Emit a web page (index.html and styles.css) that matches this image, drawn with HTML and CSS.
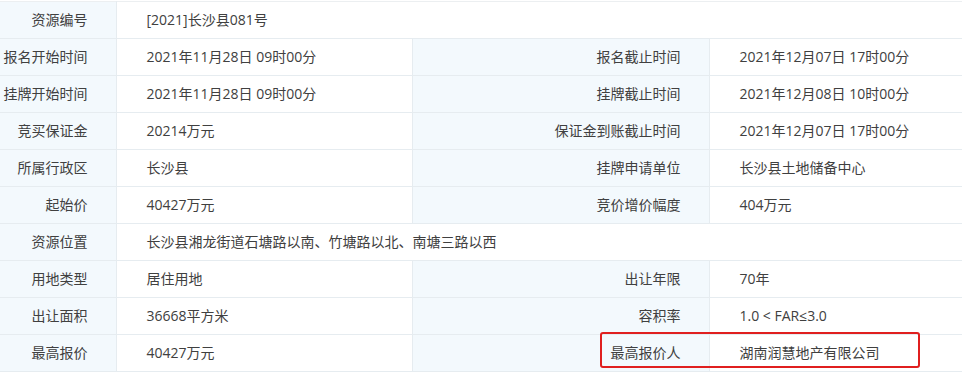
FILE: index.html
```html
<!DOCTYPE html>
<html lang="zh-CN">
<head>
<meta charset="utf-8">
<title>资源信息</title>
<link rel="stylesheet" href="styles.css">
</head>
<body>
<div class="wrap">
<table class="info">
  <colgroup>
    <col class="c1"><col class="c2"><col class="c3"><col class="c4">
  </colgroup>
  <tr><th>资源编号</th><td colspan="3">[2021]长沙县081号</td></tr>
  <tr><th>报名开始时间</th><td>2021年11月28日 09时00分</td><th>报名截止时间</th><td>2021年12月07日 17时00分</td></tr>
  <tr><th>挂牌开始时间</th><td>2021年11月28日 09时00分</td><th>挂牌截止时间</th><td>2021年12月08日 10时00分</td></tr>
  <tr><th>竞买保证金</th><td>20214万元</td><th>保证金到账截止时间</th><td>2021年12月07日 17时00分</td></tr>
  <tr><th>所属行政区</th><td>长沙县</td><th>挂牌申请单位</th><td>长沙县土地储备中心</td></tr>
  <tr><th>起始价</th><td>40427万元</td><th>竞价增价幅度</th><td>404万元</td></tr>
  <tr><th>资源位置</th><td colspan="3">长沙县湘龙街道石塘路以南、竹塘路以北、南塘三路以西</td></tr>
  <tr><th>用地类型</th><td>居住用地</td><th>出让年限</th><td>70年</td></tr>
  <tr><th>出让面积</th><td>36668平方米</td><th>容积率</th><td>1.0 &lt; FAR≤3.0</td></tr>
  <tr><th>最高报价</th><td>40427万元</td><th>最高报价人</th><td>湖南润慧地产有限公司</td></tr>
</table>
<div class="mark"></div>
</div>
</body>
</html>
```

FILE: styles.css
```css
html, body {
  margin: 0;
  padding: 0;
  background: #ffffff;
}
body {
  font-family: "Open Sans", "Noto Sans CJK SC", "Microsoft YaHei", sans-serif;
  font-size: 14px;
  color: #404040;
  overflow: hidden;
}
.wrap {
  position: relative;
  padding-top: 1px;
}
.info {
  border-collapse: collapse;
  table-layout: fixed;
  width: 1000px;
}
.c1 { width: 116px; }
.c2 { width: 296px; }
.c3 { width: 297px; }
.c4 { width: 291px; }
.info th, .info td {
  height: 36px;
  padding: 0;
  border: 1px solid #e6ecf0;
  font-weight: normal;
  line-height: 20px;
  white-space: nowrap;
}
.info tr:first-child th, .info tr:first-child td {
  border-top-color: #eceff1;
}
.info th:first-child {
  border-left: none;
}
.info th {
  background: #f3f9fd;
  text-align: right;
  padding-right: 28px;
}
.info td {
  background: #ffffff;
  text-align: left;
  padding-left: 30px;
}
.mark {
  position: absolute;
  left: 600px;
  top: 332px;
  width: 316px;
  height: 32px;
  border: 2px solid #e01f1f;
  border-radius: 3px;
}
```
